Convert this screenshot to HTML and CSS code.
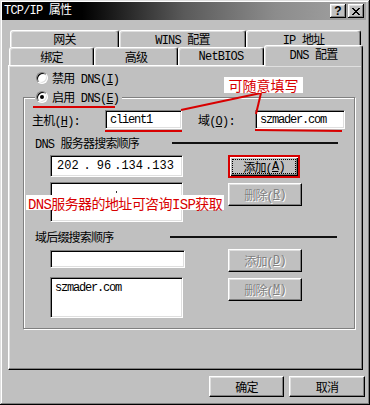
FILE: index.html
```html
<!DOCTYPE html>
<html lang="zh-CN">
<head>
<meta charset="utf-8">
<title>TCP/IP 属性</title>
<link rel="stylesheet" href="styles.css">
</head>
<body>
<div class="window">
  <div class="titlebar">
    <span class="title">TCP/IP 属性</span>
    <div class="tb-buttons">
      <span class="tbtn help">?</span>
      <span class="tbtn close"><svg width="8" height="7" viewBox="0 0 8 7"><path d="M0 0h2v1h1v1h2V1h1V0h2v1H7v1H6v1H5v1h1v1h1v1h1v1H6V6H5V5H3v1H2v1H0V6h1V5h1V4h1V3H2V2H1V1H0z" fill="#000"/></svg></span>
    </div>
  </div>

  <div class="tabs">
    <div class="tabrow row1">
      <div class="tab t-gw">网关</div>
      <div class="tab t-wins">WINS 配置</div>
      <div class="tab t-ip">IP 地址</div>
    </div>
    <div class="tabrow row2">
      <div class="tab t-bind">绑定</div>
      <div class="tab t-adv">高级</div>
      <div class="tab t-nb">NetBIOS</div>
      <div class="tab sel t-dns">DNS 配置</div>
    </div>
  </div>

  <div class="panel">
    <div class="radio r-off"><span class="rb"></span><span>禁用 DNS(<u>I</u>)</span></div>

    <div class="group">
      <div class="radio legend"><span class="rb on"></span><span>启用 DNS(<u>E</u>)</span></div>

      <div class="hostrow">
        <span class="lbl host-lbl">主机(<u>H</u>):</span>
        <span class="field host-in">client1</span>
        <span class="lbl dom-lbl">域(<u>O</u>):</span>
        <span class="field dom-in">szmader.com</span>
      </div>

      <div class="heading">
        <span>DNS 服务器搜索顺序</span>
        <span class="rule rule1"></span>
      </div>

      <div class="pair pair1">
        <div class="col">
          <div class="field ip-in">
            <span>202</span><span class="d1">.</span><span class="o2">96</span><span class="d2">.</span><span>134</span><span class="d3">.</span><span>133</span>
          </div>
          <div class="field list list1"><span class="speck"></span></div>
        </div>
        <div class="col">
          <div class="btn focus w72"><span class="focusrect">添加(<u>A</u>)</span></div>
          <div class="btn dis w74 gap5">删除(<u>R</u>)</div>
        </div>
      </div>

      <div class="heading h2">
        <span>域后缀搜索顺序</span>
        <span class="rule rule2"></span>
      </div>

      <div class="pair pair2">
        <div class="col">
          <div class="field suf-in"></div>
          <div class="field list list2">szmader.com</div>
        </div>
        <div class="col">
          <div class="btn dis w74">添加(<u>D</u>)</div>
          <div class="btn dis w74 gap6">删除(<u>M</u>)</div>
        </div>
      </div>
    </div>
  </div>

  <div class="footer">
    <div class="btn ok">确定</div>
    <div class="btn cancel">取消</div>
  </div>

  <svg class="annot" width="370" height="405" viewBox="0 0 370 405">
    <g stroke="#d80000" stroke-width="2" fill="none">
      <line x1="33" y1="107" x2="115" y2="107"/>
      <line x1="105" y1="131" x2="182" y2="131"/>
      <line x1="255" y1="130" x2="342" y2="131"/>
      <line x1="181" y1="110" x2="261" y2="93"/>
      <line x1="261" y1="93" x2="256" y2="114"/>
    </g>
  </svg>
  <div class="callout c1">可随意填写</div>
  <div class="callout c2">DNS服务器的地址可咨询ISP获取</div>
</div>
</body>
</html>
```
FILE: styles.css
```css
* { box-sizing: border-box; }
html, body { margin: 0; padding: 0; }
body {
  width: 370px;
  height: 405px;
  overflow: hidden;
  background: #c0c0c0;
  font-family: "Liberation Mono", "Noto Sans CJK SC", monospace;
  font-size: 12px;
  letter-spacing: -0.8px;
  color: #000;
}
u { text-decoration: underline; text-underline-offset: 1px; }

.window {
  position: relative;
  width: 370px;
  height: 405px;
  padding: 2px;
  background: #c0c0c0;
  box-shadow: inset -1px -1px #000, inset 1px 1px #dfdfdf, inset -2px -2px #808080, inset 2px 2px #fff;
  display: flex;
  flex-direction: column;
}

/* title bar */
.titlebar {
  height: 18px;
  width: 364px;
  background: linear-gradient(90deg, #000 0%, #000 22%, #5a5a5a 50%, #8c8c8c 75%, #a4a4a4 100%);
  display: flex;
  align-items: center;
  justify-content: space-between;
  padding: 0 2px 0 2px;
}
.title { color: #fff; line-height: 14px; }
.tb-buttons { display: flex; gap: 2px; }
.tbtn {
  width: 16px;
  height: 14px;
  background: #c0c0c0;
  box-shadow: inset -1px -1px #000, inset 1px 1px #fff, inset -2px -2px #808080, inset 2px 2px #dfdfdf;
  display: flex;
  align-items: center;
  justify-content: center;
}
.help { font: bold 12px "Liberation Sans", sans-serif; letter-spacing: 0; padding-bottom: 1px; }

/* tabs */
.tabs {
  height: 45px;
  padding-top: 10px;
  display: flex;
  flex-direction: column;
}
.tabrow { display: flex; }
.row1 { height: 17px; margin-left: 8px; }
.row2 { height: 18px; margin-left: 7px; align-items: flex-start; }
.tab {
  height: 100%;
  display: flex;
  align-items: center;
  justify-content: center;
  background: #c0c0c0;
  border-top: 1px solid #fff;
  border-left: 1px solid #fff;
  border-right: 1px solid #000;
  border-radius: 3px 3px 0 0;
  box-shadow: inset -1px 0 #808080, inset 1px 1px #dfdfdf;
}
.t-gw { width: 109px; }
.t-wins { width: 127px; }
.t-ip { width: 115px; }
.t-bind { width: 85px; }
.t-adv { width: 84px; }
.t-nb { width: 86px; }
.t-dns {
  width: 99px;
  height: 21px;
  margin-top: -2px;
  padding-bottom: 4px;
  position: relative;
  z-index: 2;
}

/* panel */
.panel {
  margin-left: 6px;
  width: 355px;
  height: 305px;
  border-top: 1px solid #fff;
  border-left: 1px solid #fff;
  border-right: 1px solid #000;
  border-bottom: 1px solid #000;
  box-shadow: inset -1px -1px #808080, inset 1px 1px #dfdfdf;
  display: flex;
  flex-direction: column;
  padding-top: 5px;
}

.radio {
  display: flex;
  align-items: center;
  height: 14px;
  gap: 4px;
}
.r-off { margin-left: 27px; }
.rb {
  width: 12px;
  height: 12px;
  border-radius: 50%;
  background: #fff;
  border: 1px solid;
  border-color: #808080 #fff #fff #808080;
  box-shadow: inset 1px 1px #000, inset -1px -1px #dfdfdf;
  display: flex;
  align-items: center;
  justify-content: center;
}
.rb.on::after {
  content: "";
  width: 4px;
  height: 4px;
  border-radius: 50%;
  background: #000;
}

.group {
  margin-top: 12px;
  margin-left: 14px;
  width: 332px;
  height: 232px;
  border: 1px solid #808080;
  box-shadow: inset 1px 1px #fff, 1px 1px #fff;
  display: flex;
  flex-direction: column;
}
.legend {
  margin-top: -8px;
  margin-left: 11px;
  padding: 0 3px 0 1px;
  background: #c0c0c0;
  align-self: flex-start;
}

.hostrow {
  margin-top: 6px;
  height: 19px;
  display: flex;
  align-items: center;
  padding-left: 8px;
}
.lbl { white-space: nowrap; }
.host-lbl { width: 73px; }
.dom-lbl { width: 57px; margin-left: 16px; }

.field {
  background: #fff;
  border: 1px solid;
  border-color: #808080 #fff #fff #808080;
  box-shadow: inset 1px 1px #000, inset -1px -1px #dfdfdf;
  letter-spacing: -1.2px;
  display: flex;
  align-items: center;
  padding-left: 4px;
  white-space: pre;
}
.host-in { width: 77px; height: 19px; }
.dom-in { width: 90px; height: 19px; }

.heading {
  margin-top: 7px;
  height: 14px;
  display: flex;
  align-items: center;
  padding-left: 11px;
}
.heading.h2 { margin-top: 8px; }
.rule {
  margin-left: auto;
  height: 2px;
  background: #111;
}
.rule1 { width: 166px; margin-right: 16px; }
.rule2 { width: 167px; margin-right: 17px; }

.pair {
  margin-top: 5px;
  padding-left: 26px;
  display: grid;
  grid-template-columns: 135px 74px;
  column-gap: 43px;
}
.col { display: flex; flex-direction: column; align-items: flex-start; }

.ip-in {
  width: 133px;
  height: 22px;
  padding-left: 6px;
  letter-spacing: 0;
}
.d1 { margin-left: 5px; }
.o2 { margin-left: 6px; }
.d2 { margin-left: 3px; }
.d3 { margin-left: 2px; }
.list { align-items: flex-start; padding-top: 2px; }
.list1 { width: 133px; height: 40px; margin-top: 5px; position: relative; }
.speck {
  position: absolute;
  left: 65px;
  top: 8px;
  width: 1px;
  height: 2px;
  background: #333;
}
.suf-in { width: 135px; height: 18px; margin-top: 1px; }
.list2 { width: 133px; height: 41px; margin-top: 9px; padding-top: 3px; }

/* buttons */
.btn {
  height: 23px;
  display: flex;
  align-items: center;
  justify-content: center;
  background: #c0c0c0;
  border: 1px solid;
  border-color: #fff #000 #000 #fff;
  box-shadow: inset -1px -1px #808080, inset 1px 1px #dfdfdf;
  white-space: nowrap;
}
.w72 { width: 72px; }
.w74 { width: 74px; }
.gap5 { margin-top: 5px; }
.gap6 { margin-top: 6px; }
.btn.focus {
  border: 2px solid #d80000;
  box-shadow: inset 1px 1px #fff, inset -1px -1px #000, inset -2px -2px #808080;
  padding: 2px;
}
.focusrect {
  width: 100%;
  height: 100%;
  display: flex;
  align-items: center;
  justify-content: center;
  outline: 1px dotted #000;
  outline-offset: -1px;
}
.btn.dis { color: #808080; text-shadow: 1px 1px 0 #fff; }

.footer {
  margin-top: 6px;
  display: flex;
  justify-content: flex-end;
  gap: 5px;
  padding-right: 3px;
}
.footer .btn { height: 21px; }
.ok { width: 75px; }
.cancel { width: 76px; }

/* annotations (overlay) */
.annot {
  position: absolute;
  left: 0;
  top: 0;
  pointer-events: none;
  z-index: 5;
}
.callout {
  position: absolute;
  z-index: 6;
  background: #fff;
  color: #d80000;
  display: flex;
  align-items: center;
  justify-content: center;
  white-space: nowrap;
}
.c1 {
  left: 224px;
  top: 77px;
  width: 79px;
  height: 16px;
  font: 14px "Noto Sans CJK SC", sans-serif;
  letter-spacing: 0;
}
.c2 {
  left: 26px;
  top: 195px;
  width: 198px;
  height: 15px;
  font-size: 14px;
  letter-spacing: -0.6px;
}
```
